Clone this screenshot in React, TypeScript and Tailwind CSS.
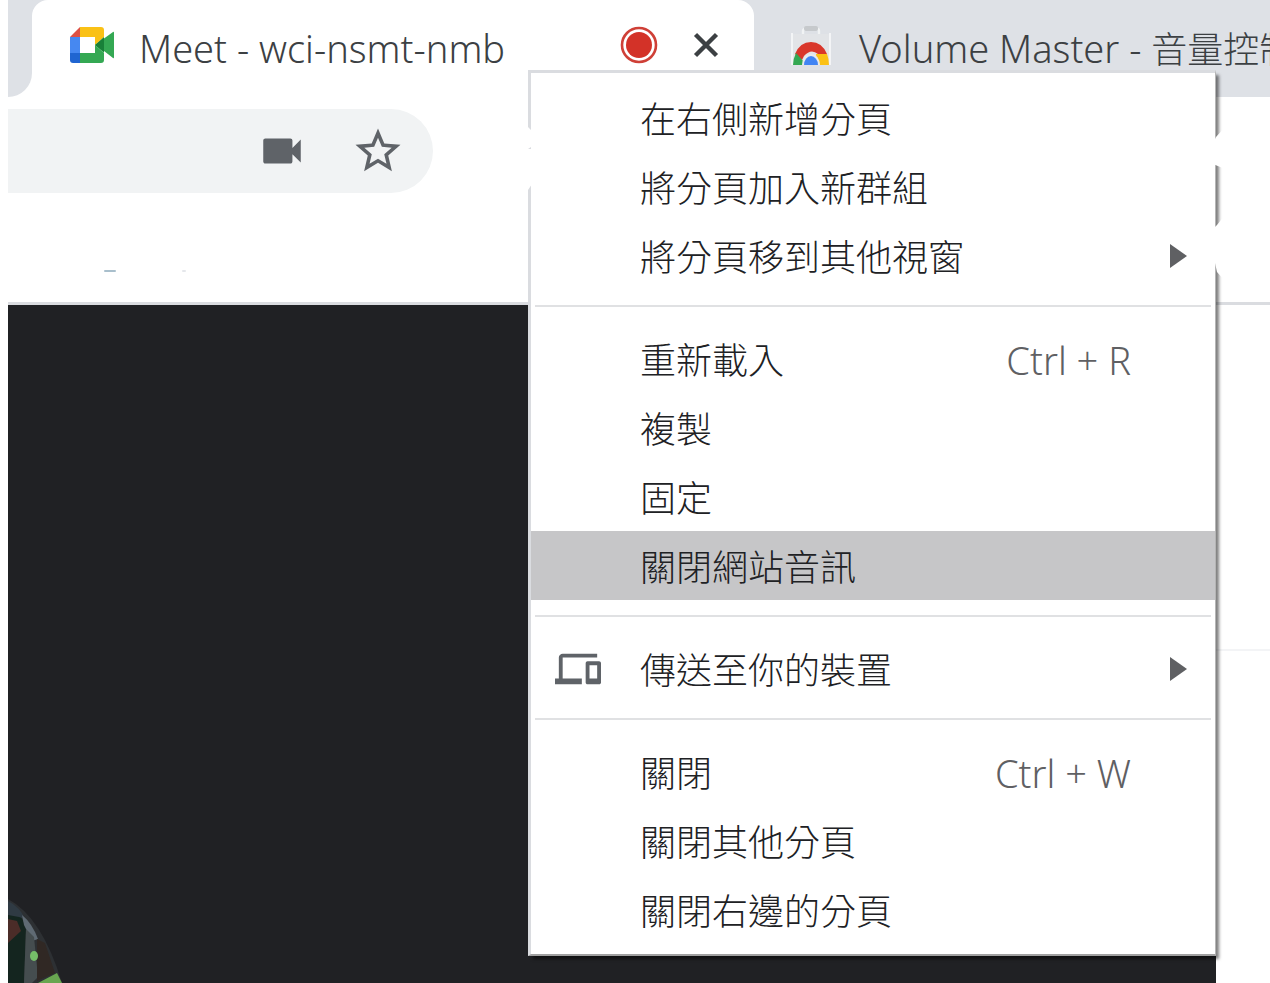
import { MdDevices, MdStarBorder, MdVideocam } from "react-icons/md";

interface MenuItem {
  label: string;
  shortcut?: string;
  submenu?: boolean;
  active?: boolean;
  icon?: boolean;
}

const menuGroups: MenuItem[][] = [
  [
    { label: "在右側新增分頁" },
    { label: "將分頁加入新群組" },
    { label: "將分頁移到其他視窗", submenu: true },
  ],
  [
    { label: "重新載入", shortcut: "Ctrl + R" },
    { label: "複製" },
    { label: "固定" },
    { label: "關閉網站音訊", active: true },
  ],
  [{ label: "傳送至你的裝置", submenu: true, icon: true }],
  [
    { label: "關閉", shortcut: "Ctrl + W" },
    { label: "關閉其他分頁" },
    { label: "關閉右邊的分頁" },
  ],
];

function MeetLogo() {
  return (
    <svg width="46" height="38" viewBox="0 0 46 38" className="shrink-0" aria-hidden="true">
      <path d="M11 1v10H1z" fill="#dd5144" />
      <path d="M11 1h21q3 0 3 3v7l-9 8v-8H11z" fill="#fac116" />
      <path d="M1 11h10v16H1z" fill="#4688f1" />
      <path d="M1 27h10v10H4q-3 0-3-3z" fill="#2065d1" />
      <path d="M11 27h15v-8l9 8v7q0 3-3 3H11z" fill="#34a853" />
      <path d="M26 19l18-13q1-1 1 1v24q0 2-1 1l-9-7v2z" fill="#34a853" />
      <path d="M26 19l9-8v15z" fill="#188038" />
    </svg>
  );
}

function WebStoreLogo() {
  return (
    <svg width="40" height="40" viewBox="0 0 40 40" className="shrink-0" aria-hidden="true">
      <path d="M1 8h38v31H1z" fill="#e2e4e7" />
      <path d="M1 7v32M39 7v32" stroke="#f8f9fa" strokeWidth="1.6" />
      <path d="M12 8V5q0-2 2-2h12q2 0 2 2v3" fill="none" stroke="#f1f3f4" strokeWidth="2.4" />
      <rect x="13" y="0" width="14" height="5" rx="2" fill="#c6c9cc" />
      <path d="M4 28Q9 16 20 16T36 28H27Q20 22 13 30L11 34z" fill="#d9372b" />
      <path d="M2 39q0-6 3-12l8 9v3z" fill="#34a853" />
      <path d="M25 28h11q2 5 2 11H26z" fill="#fbc116" />
      <path d="M11 39a9 11 0 0 1 18 0z" fill="#e8eaed" />
      <path d="M13 39a7 9 0 0 1 14 0z" fill="#4285f4" />
    </svg>
  );
}

function RecordingIcon() {
  return (
    <svg width="38" height="38" viewBox="0 0 38 38" className="shrink-0" role="img" aria-label="錄製中">
      <circle cx="19" cy="19" r="17" fill="none" stroke="#cf4037" strokeWidth="2.6" />
      <circle cx="19" cy="19" r="13" fill="#d33228" />
    </svg>
  );
}

function TabStrip() {
  return (
    <div role="tablist" className="flex h-[97px] bg-white text-[38px]">
      <div className="w-6 shrink-0 rounded-br-3xl bg-[#dee1e6]" />
      <div className="w-[722px] shrink-0 bg-linear-to-b from-[#dee1e6] from-50% to-white to-50%">
        <div className="flex h-full items-start rounded-t-2xl bg-white pl-[37px] pr-8 pt-[26px]">
          <MeetLogo />
          <button role="tab" aria-selected="true" className="ml-6 h-11 flex-1 text-left leading-[44px] whitespace-nowrap">
            Meet - wci-nsmt-nmb
          </button>
          <RecordingIcon />
          <button aria-label="關閉分頁" className="ml-8 flex h-[38px] w-8 items-center justify-center">
            <svg width="28" height="28" viewBox="0 0 28 28" aria-hidden="true">
              <path d="M3.5 3.5l21 21M24.5 3.5l-21 21" stroke="#3c4043" strokeWidth="4.4" />
            </svg>
          </button>
        </div>
      </div>
      <div className="flex min-w-0 flex-1 items-start overflow-hidden bg-[#dee1e6] pl-[37px] pt-[26px]">
        <WebStoreLogo />
        <button role="tab" aria-selected="false" className="ml-7 h-11 leading-[44px] whitespace-nowrap">
          Volume Master - <span className="text-[36px]">音量控制</span>
        </button>
      </div>
    </div>
  );
}

function Toolbar() {
  return (
    <div className="h-[208px] border-b-[3px] border-[#dadce0] bg-white pt-3">
      <div className="flex h-[84px] w-[425px] items-center rounded-r-full bg-[#f1f3f4] pr-7 text-[#5f6368]">
        <input aria-label="網址列" className="h-full min-w-0 flex-1 bg-transparent outline-none" />
        <button aria-label="攝影機">
          <MdVideocam size={50} />
        </button>
        <button aria-label="加入書籤" className="ml-11">
          <MdStarBorder size={54} />
        </button>
      </div>
      {/* leftovers of the bookmarks row */}
      <div className="mt-[77px] flex gap-[66px] pl-[96px]">
        <div className="h-[2px] w-3 rounded-full bg-[#a9bfcc]" />
        <div className="h-[2px] w-1 rounded-full bg-gray-200" />
      </div>
    </div>
  );
}

function VideoCorner() {
  return (
    <svg width="56" height="86" viewBox="0 0 56 86" aria-hidden="true">
      <path d="M0 2Q34 20 54 86H0z" fill="#2d3033" />
      <path d="M0 12Q12 14 18 30L16 86H0z" fill="#14251f" />
      <path d="M0 22l9 2 4 10L0 46z" fill="#4b2c28" />
      <path d="M0 4Q12 10 17 22l-6-2L0 18z" fill="#2f3a43" />
      <path d="M14 18q10 8 16 24l-6 2-8-16z" fill="#5f6a73" />
      <path d="M18 32l8 8 4 40-6 6h-8z" fill="#454d4f" />
      <path d="M29 42l8 4 10 30-18 8z" fill="#302824" />
      <ellipse cx="26" cy="59" rx="4" ry="5" fill="#75bd68" />
      <path d="M30 86l19-10 5 10z" fill="#69a650" />
    </svg>
  );
}

function ContextMenu() {
  return (
    <div
      role="menu"
      className="absolute left-[528px] top-[70px] w-[688px] border-[3px] border-r border-b-2 border-[#dadce0] border-r-[#b5b5b5] border-b-[#a0a0a0] bg-white pt-[10px] pb-[10px] shadow-[4px_4px_3px_-1px_rgba(0,0,0,0.5)]"
    >
      {menuGroups.map((group, i) => (
        <div key={i}>
          {i > 0 && (
            <div role="separator" className="mx-1 flex h-[34px] flex-col pt-[15px]">
              <div className="h-[2px] bg-[#e0e1e3]" />
            </div>
          )}
          {group.map((item) => (
            <button
              key={item.label}
              role="menuitem"
              className={`flex h-[69px] w-full items-center pr-7 text-left text-[#202124] ${item.active ? "bg-[#c6c6c8]" : ""}`}
            >
              <span className="flex w-[109px] shrink-0 pl-6 text-[#5f6368]">
                {item.icon && <MdDevices size={46} />}
              </span>
              <span className="flex-1 pt-1 whitespace-nowrap">{item.label}</span>
              {item.shortcut && <span className="mr-14 pt-1 text-[38px] text-[#5f6063]">{item.shortcut}</span>}
              {item.submenu && (
                <svg width="18" height="24" viewBox="0 0 18 24" aria-hidden="true">
                  <path d="M1 0l17 12L1 24z" fill="#5f6063" />
                </svg>
              )}
            </button>
          ))}
        </div>
      ))}
      {/* worn spots along the edges */}
      <svg width="10" height="66" viewBox="0 0 10 66" className="absolute -left-[5px] top-[54px]" aria-hidden="true">
        <path d="M0 0h2l6 6v12l-6 4h6v32l-6 9H0z" fill="#fff" />
      </svg>
      <svg width="12" height="200" viewBox="0 0 12 200" className="absolute -right-[10px] top-[54px]" aria-hidden="true">
        <path d="M0 16l3-6 9-10v42L0 37zM0 102l4-4 8-10v66l-8-9-4-18z" fill="#fff" />
      </svg>
    </div>
  );
}

export default function App() {
  return (
    <div className="relative flex min-h-screen flex-col overflow-hidden bg-white pl-2 font-['Noto_Sans','Noto_Sans_CJK_TC',sans-serif] text-[36px] font-light text-[#3c4043]">
      <TabStrip />
      <Toolbar />
      <main className="flex flex-1">
        <div className="flex flex-1 items-end bg-[#202124]">
          <VideoCorner />
        </div>
        <aside className="w-[54px] shrink-0 bg-white pt-[344px]">
          <div className="h-[2px] bg-gray-100" />
        </aside>
      </main>
      <ContextMenu />
    </div>
  );
}
